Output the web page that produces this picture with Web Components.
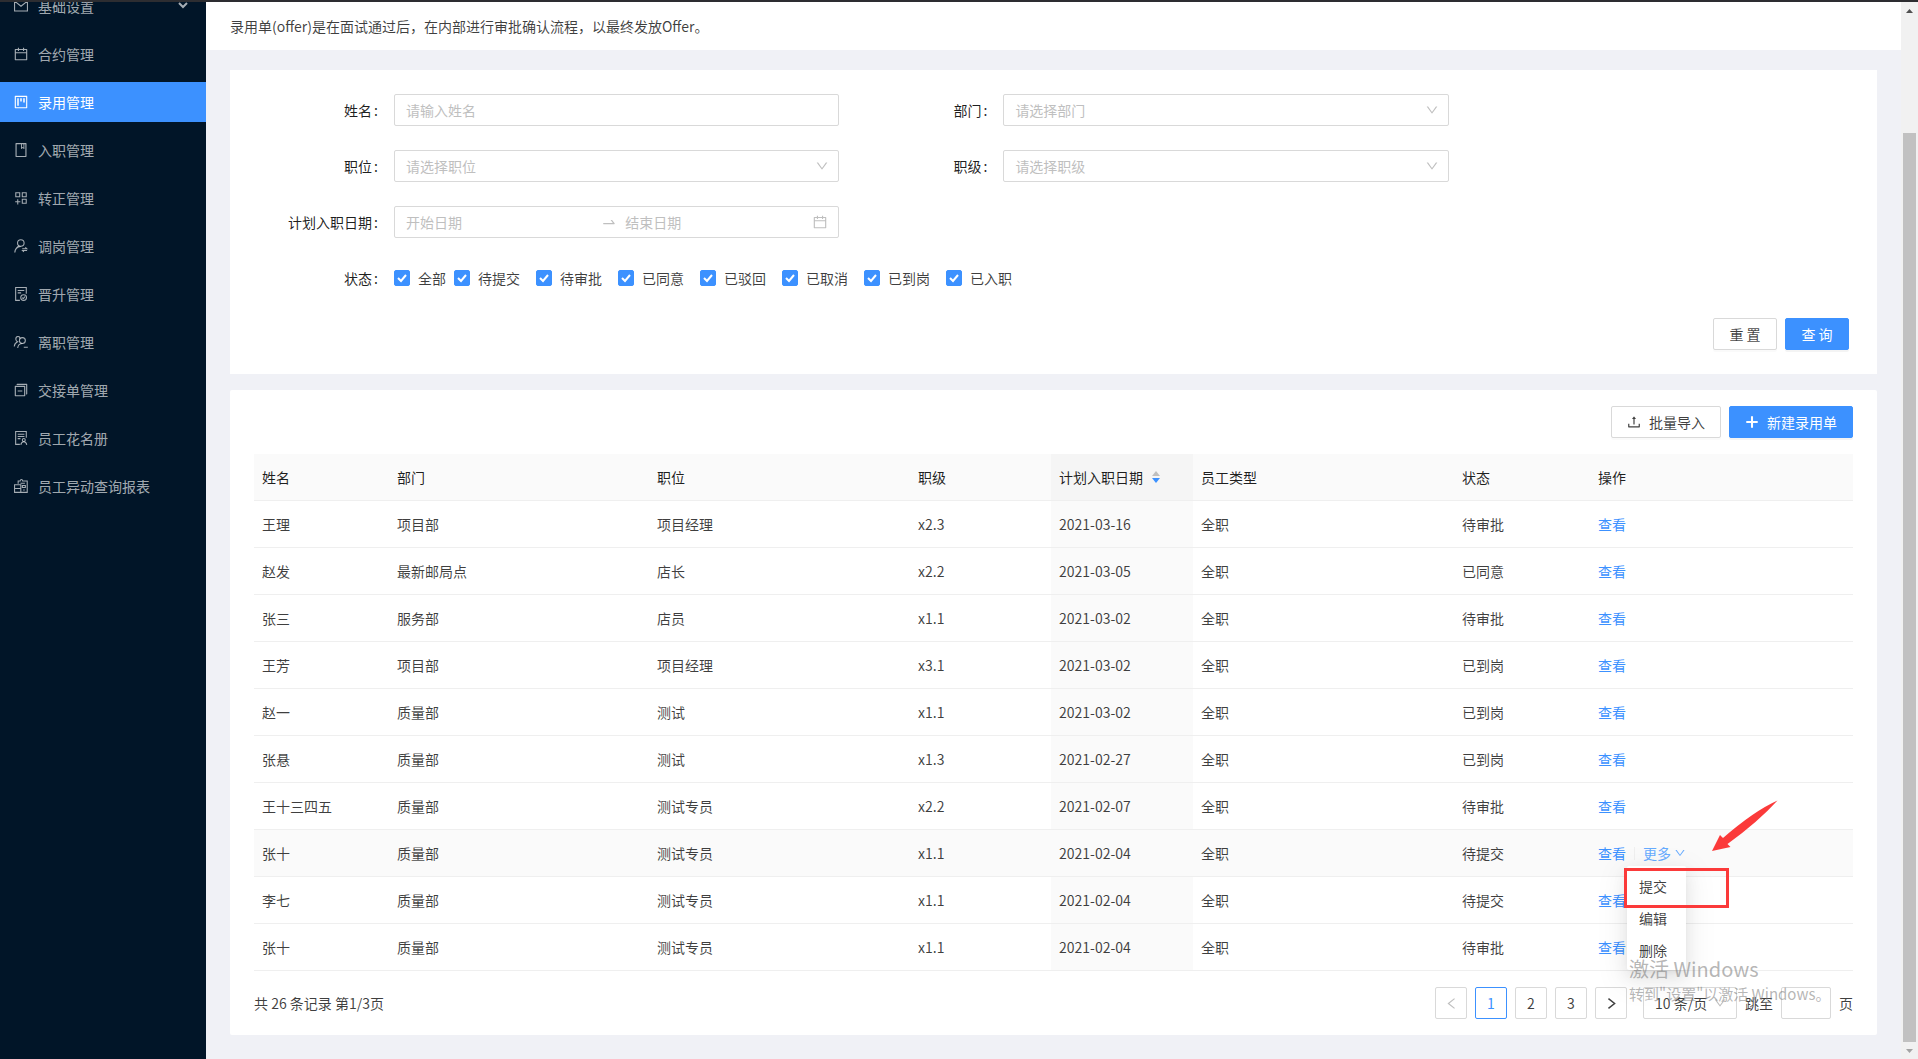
<!DOCTYPE html>
<html lang="zh-CN">
<head>
<meta charset="utf-8">
<title>录用管理</title>
<style>
:root {
  --brand: #3c91ff;
  --brand-light: #66abff;
  --page: #f0f1f6;
  --line: #d9d9d9;
  --hair: #efefef;
  --text: rgba(0, 0, 0, .75);
  --title: rgba(0, 0, 0, .88);
  --hint: #bfbfbf;
}
body {
  margin: 0;
  font: 14px/22px "Noto Sans CJK SC", sans-serif;
  color: var(--text);
  background: var(--page);
}
</style>
</head>
<body>
<app-shell>
  <side-nav slot="nav"></side-nav>
  <page-intro>录用单(offer)是在面试通过后，在内部进行审批确认流程，以最终发放Offer。</page-intro>
  <search-panel>
    <text-field label="姓名" hint="请输入姓名"></text-field>
    <select-field label="部门" hint="请选择部门"></select-field>
    <select-field label="职位" hint="请选择职位"></select-field>
    <select-field label="职级" hint="请选择职级"></select-field>
    <range-field label="计划入职日期"></range-field>
    <status-field label="状态" options="全部,待提交,待审批,已同意,已驳回,已取消,已到岗,已入职"></status-field>
  </search-panel>
  <offer-panel>
    <ui-button slot="tools" icon="upload">批量导入</ui-button>
    <ui-button slot="tools" icon="plus" primary>新建录用单</ui-button>
    <offer-table></offer-table>
    <page-bar></page-bar>
  </offer-panel>
  <scroll-track slot="scroll"></scroll-track>
  <mark-layer slot="over"></mark-layer>
</app-shell>

<script>
const S = 'fill="none" stroke="currentColor" stroke-width="68"';
const ICONS = {
  mail: `<path ${S} d="M100 196h824v632H100zM130 220l382 310 382-310"/>`,
  calendar: '<path d="M880 184H712v-64c0-4.4-3.6-8-8-8h-56c-4.4 0-8 3.6-8 8v64H384v-64c0-4.4-3.6-8-8-8h-56c-4.4 0-8 3.6-8 8v64H144c-17.7 0-32 14.3-32 32v664c0 17.7 14.3 32 32 32h736c17.7 0 32-14.3 32-32V216c0-17.7-14.3-32-32-32zm-40 656H184V460h656v380zM184 392V256h128v48c0 4.4 3.6 8 8 8h56c4.4 0 8-3.6 8-8v-48h256v48c0 4.4 3.6 8 8 8h56c4.4 0 8-3.6 8-8v-48h128v136H184z"/>',
  project: '<path d="M280 752h80c4.4 0 8-3.6 8-8V280c0-4.4-3.6-8-8-8h-80c-4.4 0-8 3.6-8 8v464c0 4.4 3.6 8 8 8zm192-280h80c4.4 0 8-3.6 8-8V280c0-4.4-3.6-8-8-8h-80c-4.4 0-8 3.6-8 8v184c0 4.4 3.6 8 8 8zm192 72h80c4.4 0 8-3.6 8-8V280c0-4.4-3.6-8-8-8h-80c-4.4 0-8 3.6-8 8v256c0 4.4 3.6 8 8 8zm216-432H144c-17.7 0-32 14.3-32 32v736c0 17.7 14.3 32 32 32h736c17.7 0 32-14.3 32-32V144c0-17.7-14.3-32-32-32zm-40 728H184V184h656v656z"/>',
  book: '<path d="M832 64H192c-17.7 0-32 14.3-32 32v832c0 17.7 14.3 32 32 32h640c17.7 0 32-14.3 32-32V96c0-17.7-14.3-32-32-32zm-260 72h96v209.9L621.5 312 572 347.4V136zm220 752H232V136h280v296.9c0 3.3 1 6.6 3 9.3a15.9 15.9 0 0 0 22.3 3.7l83.8-59.9 81.4 59.4c2.7 2 6 3.1 9.4 3.1 8.8 0 16-7.2 16-16V136h64v752z"/>',
  appadd: `<path ${S} d="M178 178h252v252H178zM594 178h252v252H594zM594 594h252v252H594zM304 590v330M140 755h330"/>`,
  userswitch: `<circle ${S} cx="500" cy="320" r="210"/><path ${S} d="M120 930c10-210 150-370 370-390M400 510C230 580 130 730 110 930"/><path ${S} d="M590 690h290l-90-90M900 800H610l90 90"/>`,
  filedone: `<path ${S} d="M440 920H170V100h680v400M300 290h420M300 440h220"/><circle ${S} cx="680" cy="740" r="185"/><path ${S} d="M590 740l70 70 110-140"/>`,
  userdel: `<circle ${S} cx="600" cy="420" r="190"/><path ${S} d="M300 900c20-180 110-280 300-290M460 290C420 90 170 130 180 340c10 100 60 140 110 160C150 570 90 680 80 800M690 850h260"/>`,
  switcher: '<path d="M752 240H144c-17.700 0-32 14.300-32 32v608c0 17.700 14.300 32 32 32h608c17.700 0 32-14.300 32-32V272c0-17.700-14.300-32-32-32zm-40 600H184V312h528v528zM300 550h296v64H300zM880 112H264c-17.700 0-32 14.300-32 32v40h608v608h40c17.700 0 32-14.300 32-32V144c0-17.700-14.300-32-32-32z"/>',
  solution: `<path ${S} d="M440 920H170V100h680v400M300 270h430M300 410h430M300 550h180"/><circle ${S} cx="690" cy="640" r="95"/><path ${S} d="M500 950c20-130 90-200 190-200s170 70 190 200"/>`,
  recon: `<path ${S} d="M330 360V190h130c10-130 150-130 160 0h290v730H520M100 430h400v490H100zM100 670h400M480 330h280M600 480h190v130H600zM650 770h100"/>`,
  down: '<path d="M884 256h-75c-5.100 0-9.900 2.500-12.900 6.600L512 654.200 227.900 262.600c-3-4.100-7.800-6.600-12.900-6.600h-75c-6.500 0-10.300 7.400-6.500 12.700l352.600 486.100c12.800 17.600 39 17.600 51.700 0l352.600-486.100c3.900-5.300.1-12.700-6.400-12.700z"/>',
  swap: '<path d="M873.1 596.2l-164-208A32 32 0 0 0 684 376h-64.800c-6.700 0-10.400 7.700-6.300 13l144.300 183H152c-4.400 0-8 3.600-8 8v60c0 4.400 3.600 8 8 8h695.900c26.800 0 41.700-30.800 25.200-51.800z"/>',
  upload: '<path d="M400 317.7h73.900V656c0 4.400 3.600 8 8 8h60c4.400 0 8-3.600 8-8V317.700H624c6.700 0 10.400-7.700 6.300-12.900L518.300 163a8 8 0 0 0-12.600 0l-112 141.700c-4.100 5.300-.4 13 6.300 13zM878 626h-60c-4.400 0-8 3.600-8 8v154H214V634c0-4.400-3.600-8-8-8h-60c-4.400 0-8 3.600-8 8v198c0 17.700 14.300 32 32 32h684c17.700 0 32-14.300 32-32V634c0-4.400-3.600-8-8-8z"/>',
  plus: '<path d="M446 146h132v300h300v132H578v300H446V578H146V446h300z"/>',
  left: '<path fill="none" stroke="currentColor" stroke-width="80" d="M720 180L300 512l420 332"/>',
  right: '<path fill="none" stroke="currentColor" stroke-width="100" d="M304 180l420 332-420 332"/>'
};
const icon = (name, size = 14) =>
  `<svg class="i" aria-hidden="true" width="${size}" height="${size}" viewBox="0 0 1024 1024" fill="currentColor">${ICONS[name]}</svg>`;

const BASE = `
  *, ::before, ::after { box-sizing: border-box; }
  svg { display: block; flex: none; }
  ul { list-style: none; margin: 0; padding: 0; }
  a { color: var(--brand); text-decoration: none; }
  input, select, button { font: inherit; color: inherit; margin: 0; outline: none; }
  input::placeholder { color: var(--hint); opacity: 1; }
  select { appearance: none; cursor: pointer; }
`;
const define = (tag, render) => customElements.define(tag, class extends HTMLElement {
  constructor() {
    super();
    this.attachShadow({ mode: 'open' });
  }
  connectedCallback() {
    this.shadowRoot.innerHTML = `<style>${BASE}</style>` + render(this);
  }
});

define('app-shell', () => `
<style>
  :host { display: flex; flex-direction: column; box-sizing: border-box; min-height: 100vh; position: relative; border-top: 2px solid #2d2d31; }
  .body { flex: 1; display: flex; }
  main { flex: 1; min-width: 0; padding-bottom: 24px; }
</style>
<div class="body"><slot name="nav"></slot><main><slot></slot></main><slot name="scroll"></slot></div>
<slot name="over"></slot>`);

const NAV = [
  ['mail', '基础设置'], ['calendar', '合约管理'], ['project', '录用管理'], ['book', '入职管理'],
  ['appadd', '转正管理'], ['userswitch', '调岗管理'], ['filedone', '晋升管理'], ['userdel', '离职管理'],
  ['switcher', '交接单管理'], ['solution', '员工花名册'], ['recon', '员工异动查询报表']
];
define('side-nav', () => `
<style>
  :host { display: block; width: 206px; flex: none; overflow: hidden; background: #011528; }
  ul { display: flex; flex-direction: column; gap: 8px; margin-top: -16px; }
  a { display: flex; align-items: center; gap: 9px; height: 40px; padding: 0 18px 0 13px; color: rgba(255,255,255,.65); }
  a[aria-current] { background: var(--brand); color: #fff; }
  span { flex: 1; }
</style>
<nav><ul>${NAV.map(([i, t], n) => `<li><a href="#"${n === 2 ? ' aria-current="page"' : ''}>${icon(i, 16)}<span>${t}</span>${
  n ? '' : '<svg width="10" height="8" viewBox="0 0 10 8" fill="none" stroke="currentColor" stroke-width="2"><path d="M1 1l4 4 4-4"/></svg>'}</a></li>`).join('')}</ul></nav>`);

define('page-intro', () => `
<style>
  :host { display: block; padding: 13px 24px; background: #fff; }
</style><slot></slot>`);

define('search-panel', () => `
<style>
  :host { display: block; margin: 20px 24px 16px; padding: 24px 0; background: #fff; }
  form { display: grid; grid-template-columns: 37% 37%; row-gap: 24px; }
  ::slotted(status-field) { grid-column: 1 / -1; }
  .act { display: flex; justify-content: flex-end; gap: 8px; padding: 24px 28px 0; }
</style>
<form><slot></slot></form>
<div class="act"><ui-button>重 置</ui-button><ui-button primary>查 询</ui-button></div>`);

const FIELD = `
<style>
  :host { display: flex; align-items: center; min-height: 32px; }
  .cap { width: 164px; flex: none; padding-right: 16px; text-align: right; color: var(--title); }
  .cap::after { content: ":"; margin-left: 2px; }
  .box { flex: 1; min-width: 0; height: 32px; border: 1px solid var(--line); border-radius: 2px; background: #fff; }
  input, select { border: 0; background: none; width: 100%; padding: 0; }
</style>`;
define('text-field', el => FIELD + `
<style>.box { padding: 0 11px; } input { height: 30px; display: block; }</style>
<label class="cap" for="c">${el.getAttribute('label')}</label>
<div class="box"><input id="c" type="text" placeholder="${el.getAttribute('hint')}"></div>`);

define('select-field', el => FIELD + `
<style>
  .box { display: grid; align-items: center; }
  select, svg { grid-area: 1 / 1; }
  select { height: 30px; padding: 0 30px 0 11px; color: var(--hint); }
  svg { justify-self: end; margin-right: 9px; color: var(--hint); pointer-events: none; }
</style>
<label class="cap" for="c">${el.getAttribute('label')}</label>
<div class="box"><select id="c"><option>${el.getAttribute('hint')}</option></select>${icon('down', 14)}</div>`);

define('range-field', el => FIELD + `
<style>
  .box { display: flex; align-items: center; padding: 0 10px 0 11px; color: var(--hint); }
  input { flex: 1; min-width: 0; height: 30px; }
  .sep { padding: 0 8px; }
</style>
<label class="cap" for="c">${el.getAttribute('label')}</label>
<div class="box"><input id="c" type="text" placeholder="开始日期"><span class="sep">${icon('swap', 16)}</span><input type="text" aria-label="结束日期" placeholder="结束日期">${icon('calendar', 16)}</div>`);

define('status-field', el => FIELD + `
<style>
  .list { display: flex; gap: 16px; }
  .list label { display: flex; align-items: center; gap: 8px; }
  .list label:first-child { margin-right: -8px; }
  .tick { display: grid; }
  .tick > * { grid-area: 1 / 1; }
  .tick input { appearance: none; width: 16px; height: 16px; border: 1px solid var(--line); border-radius: 2px; }
  .tick input:checked { background: var(--brand); border-color: var(--brand); }
  .tick svg { pointer-events: none; visibility: hidden; }
  .tick input:checked + svg { visibility: visible; }
</style>
<span class="cap" id="g">${el.getAttribute('label')}</span>
<div class="list" role="group" aria-labelledby="g">${el.getAttribute('options').split(',').map(o =>
  `<label><span class="tick"><input type="checkbox" checked><svg width="16" height="16" viewBox="0 0 16 16" fill="none" stroke="#fff" stroke-width="2"><path d="M4 8l3 3 5-6"/></svg></span>${o}</label>`).join('')}</div>`);

define('ui-button', el => `
<style>
  :host { display: block; }
  button { display: flex; align-items: center; justify-content: center; gap: 7px; min-width: 64px; height: 32px; padding: 0 15px; border: 1px solid var(--line); border-radius: 2px; background: #fff; white-space: nowrap; box-shadow: 0 2px 0 rgba(0,0,0,.02); cursor: pointer; }
  svg { margin-left: -1px; }
  :host([primary]) button { background: var(--brand); border-color: var(--brand); color: #fff; box-shadow: 0 2px 0 rgba(0,0,0,.045); }
</style>
<button type="button">${el.hasAttribute('icon') ? icon(el.getAttribute('icon'), 16) : ''}<span><slot></slot></span></button>`);

define('offer-panel', () => `
<style>
  :host { display: block; margin: 0 24px; padding: 16px 24px; background: #fff; border-radius: 2px; }
  .tools { display: flex; justify-content: flex-end; gap: 8px; margin-bottom: 16px; }
</style>
<div class="tools"><slot name="tools"></slot></div><slot></slot>`);

const COLS = [['姓名', 135], ['部门', 260], ['职位', 261], ['职级', 141], ['计划入职日期', 142], ['员工类型', 261], ['状态', 136], ['操作', 263]];
const ROWS = [
  ['王理', '项目部', '项目经理', 'x2.3', '2021-03-16', '全职', '待审批'],
  ['赵发', '最新邮局点', '店长', 'x2.2', '2021-03-05', '全职', '已同意'],
  ['张三', '服务部', '店员', 'x1.1', '2021-03-02', '全职', '待审批'],
  ['王芳', '项目部', '项目经理', 'x3.1', '2021-03-02', '全职', '已到岗'],
  ['赵一', '质量部', '测试', 'x1.1', '2021-03-02', '全职', '已到岗'],
  ['张悬', '质量部', '测试', 'x1.3', '2021-02-27', '全职', '已到岗'],
  ['王十三四五', '质量部', '测试专员', 'x2.2', '2021-02-07', '全职', '待审批'],
  ['张十', '质量部', '测试专员', 'x1.1', '2021-02-04', '全职', '待提交'],
  ['李七', '质量部', '测试专员', 'x1.1', '2021-02-04', '全职', '待提交'],
  ['张十', '质量部', '测试专员', 'x1.1', '2021-02-04', '全职', '待审批']
];
define('offer-table', () => `
<style>
  :host { display: block; }
  table { width: 100%; table-layout: fixed; border-collapse: separate; border-spacing: 0; }
  th, td { height: 47px; padding: 0 8px; text-align: left; font-weight: 400; border-bottom: 1px solid var(--hair); }
  th { background: #fafafa; color: var(--title); }
  td:nth-child(5), tr.on td { background: #fafafa; }
  th:nth-child(5) { background: #f5f5f5; }
  .sort, .ops { display: flex; align-items: center; }
  .sort { gap: 8px; }
  .ops i { width: 1px; height: 13px; margin: 0 8px; background: var(--hair); }
</style>
<table>
  <colgroup>${COLS.map(c => `<col style="width:${c[1]}px">`).join('')}</colgroup>
  <thead><tr>${COLS.map(([t], n) => n === 4
    ? `<th scope="col" aria-sort="descending"><div class="sort">${t}<svg width="10" height="14" viewBox="0 0 10 14"><path d="M5 1l4 5H1z" fill="#bfbfbf"/><path d="M5 13L1 8h8z" fill="#3c91ff"/></svg></div></th>`
    : `<th scope="col">${t}</th>`).join('')}</tr></thead>
  <tbody>${ROWS.map((r, n) => `<tr${n === 7 ? ' class="on"' : ''}>${r.map(c => `<td>${c}</td>`).join('')}<td><div class="ops"><a href="#">查看</a>${
    n === 7 ? '<i></i><more-menu></more-menu>' : ''}</div></td></tr>`).join('')}</tbody>
</table>`);

define('more-menu', () => `
<style>
  :host { display: block; position: relative; }
  a { display: flex; align-items: center; gap: 3px; color: var(--brand-light); }
  ul { position: absolute; z-index: 10; top: calc(100% + 2px); right: 0; padding: 4px 0; background: #fff; border-radius: 2px;
    box-shadow: 0 3px 6px -4px rgba(0,0,0,.12), 0 6px 16px rgba(0,0,0,.08), 0 9px 28px 8px rgba(0,0,0,.05); }
  button { display: block; height: 32px; padding: 0 19px 0 12px; border: 0; background: none; white-space: nowrap; cursor: pointer; }
</style>
<a href="#" aria-haspopup="menu" aria-expanded="true">更多${icon('down', 12)}</a>
<ul role="menu"><li><button role="menuitem">提交</button></li><li><button role="menuitem">编辑</button></li><li><button role="menuitem">删除</button></li></ul>`);

define('page-bar', () => `
<style>
  :host { display: flex; align-items: center; justify-content: space-between; padding-top: 16px; }
  nav, .jump, .btns { display: flex; align-items: center; gap: 8px; }
  .btns button, .size, .jump input { height: 32px; border: 1px solid var(--line); border-radius: 2px; background: #fff; }
  .btns button { width: 32px; padding: 0; display: grid; place-items: center; }
  .btns button[aria-current] { border-color: var(--brand); color: var(--brand); }
  .btns button:disabled { color: var(--hint); }
  .size { display: grid; align-items: center; width: 94px; margin-left: 8px; }
  .size > * { grid-area: 1 / 1; }
  .size select { height: 30px; border: 0; background: none; padding: 0 11px; }
  .size svg { justify-self: end; margin-right: 9px; color: var(--hint); pointer-events: none; }
  .jump input { width: 50px; padding: 0 8px; }
</style>
<span>共 26 条记录 第1/3页</span>
<nav aria-label="分页">
  <div class="btns">
    <button type="button" disabled aria-label="上一页">${icon('left', 15)}</button>
    <button type="button" aria-current="page">1</button>
    <button type="button">2</button>
    <button type="button">3</button>
    <button type="button" aria-label="下一页">${icon('right', 15)}</button>
  </div>
  <div class="size"><select aria-label="每页条数"><option>10 条/页</option></select>${icon('down', 14)}</div>
  <div class="jump"><label for="j">跳至</label><input id="j" type="text"><span>页</span></div>
</nav>`);

define('scroll-track', () => `
<style>
  :host { display: flex; flex-direction: column; flex: none; width: 17px; background: #f1f1f1; }
  .end { height: 17px; display: grid; place-items: center; color: #505050; }
  .end:last-child { color: #a3a3a3; }
  .gap { flex: 114; }
  .thumb { flex: 909; margin: 0 2px; background: #c1c1c1; }
</style>
<div class="end"><svg width="7" height="4" viewBox="0 0 7 4" fill="currentColor"><path d="M3.500 0L7 4H0z"/></svg></div>
<div class="gap"></div><div class="thumb"></div>
<div class="end"><svg width="7" height="4" viewBox="0 0 7 4" fill="currentColor"><path d="M0 0h7L3.500 4z"/></svg></div>`);

define('mark-layer', () => `
<style>
  :host { position: absolute; inset: 0; z-index: 20; overflow: hidden; pointer-events: none; }
  .ring, .arrow, .notice { position: absolute; }
  .ring { right: 189px; top: 866px; width: 105px; height: 40px; border: 3px solid #fb3a3a; }
  .arrow { right: 140px; top: 798px; }
  .notice { right: 93px; top: 952px; width: 196px; white-space: nowrap; color: rgba(120,120,120,.55); }
  .notice p { margin: 0; font-size: 15px; line-height: 20px; }
  .notice p:first-child { font-size: 20px; line-height: 30px; }
</style>
<div class="ring"></div>
<svg class="arrow" width="66" height="52" viewBox="0 0 66 52" fill="#fb3a3a"><path d="M65.500.5Q42 11 11 38L8 35 0 51l18.500-4-3-3Q46 22 65.500.5z"/></svg>
<div class="notice"><p>激活 Windows</p><p>转到"设置"以激活 Windows。</p></div>`);
</script>
</body>
</html>
